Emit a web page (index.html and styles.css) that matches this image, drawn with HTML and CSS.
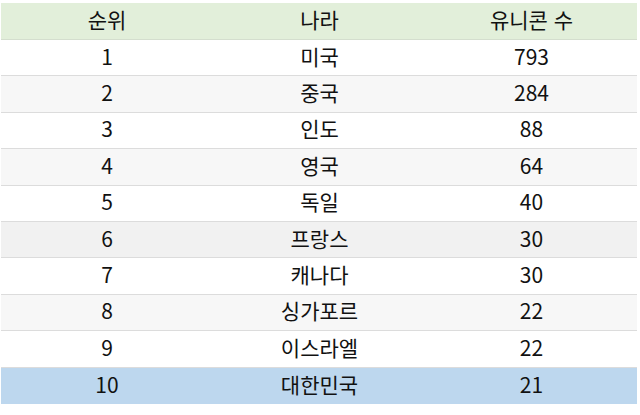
FILE: index.html
```html
<!DOCTYPE html>
<html lang="ko">
<head>
<meta charset="utf-8">
<link rel="stylesheet" href="styles.css">
</head>
<body>
<div class="table">
  <div class="row head"><div class="cell">순위</div><div class="cell">나라</div><div class="cell">유니콘 수</div></div>
  <div class="row"><div class="cell">1</div><div class="cell">미국</div><div class="cell">793</div></div>
  <div class="row alt"><div class="cell">2</div><div class="cell">중국</div><div class="cell">284</div></div>
  <div class="row"><div class="cell">3</div><div class="cell">인도</div><div class="cell">88</div></div>
  <div class="row alt"><div class="cell">4</div><div class="cell">영국</div><div class="cell">64</div></div>
  <div class="row"><div class="cell">5</div><div class="cell">독일</div><div class="cell">40</div></div>
  <div class="row alt dark"><div class="cell">6</div><div class="cell">프랑스</div><div class="cell">30</div></div>
  <div class="row"><div class="cell">7</div><div class="cell">캐나다</div><div class="cell">30</div></div>
  <div class="row alt"><div class="cell">8</div><div class="cell">싱가포르</div><div class="cell">22</div></div>
  <div class="row"><div class="cell">9</div><div class="cell">이스라엘</div><div class="cell">22</div></div>
  <div class="row korea"><div class="cell">10</div><div class="cell">대한민국</div><div class="cell">21</div></div>
</div>
</body>
</html>
```
FILE: styles.css
```css
html, body {
  margin: 0;
  padding: 0;
  background: #ffffff;
}
body {
  width: 640px;
  height: 415px;
  overflow: hidden;
  font-family: "Noto Sans CJK KR", "Noto Sans", sans-serif;
  color: #111111;
}
.table {
  display: flex;
  flex-direction: column;
  padding: 3px 3px 0 1px;
}
.row {
  display: grid;
  grid-template-columns: 212px 213px 211px;
  height: 36.4px;
  box-sizing: border-box;
  border-bottom: 1px solid #dcdcdc;
  background: #ffffff;
}
.row.head {
  height: 37px;
  background: #e2efda;
  border-bottom: 1px solid #d4dece;
}
.row.alt {
  background: #f7f7f7;
}
.row.alt.dark {
  background: #f1f1f1;
}
.row.korea {
  background: #bdd7ee;
  border-bottom: none;
}
.cell {
  display: flex;
  align-items: center;
  justify-content: center;
  font-size: 21px;
  line-height: 1;
  padding-bottom: 3px;
}
```
